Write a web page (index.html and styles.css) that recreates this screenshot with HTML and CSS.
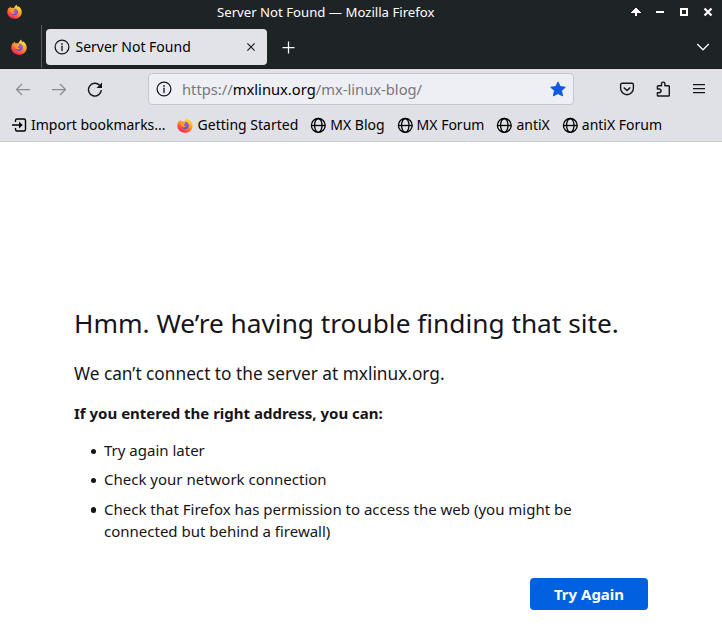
FILE: index.html
```html
<!DOCTYPE html>
<html lang="en">
<head>
<meta charset="utf-8">
<title>Server Not Found — Mozilla Firefox</title>
<link rel="stylesheet" href="styles.css">
</head>
<body>
<svg class="defs" width="0" height="0" aria-hidden="true">
  <defs>
    <linearGradient id="flame" x1="0.8" y1="0" x2="0.25" y2="1">
      <stop offset="0" stop-color="#fff44f"/>
      <stop offset="0.35" stop-color="#ffb52a"/>
      <stop offset="0.65" stop-color="#ff6a30"/>
      <stop offset="1" stop-color="#f5156c"/>
    </linearGradient>
    <radialGradient id="core" cx="0.6" cy="0.35" r="0.7">
      <stop offset="0" stop-color="#a05cf0"/>
      <stop offset="1" stop-color="#5b4bc8"/>
    </radialGradient>
    <symbol id="firefox" viewBox="0 0 16 16">
      <path fill="url(#flame)" d="M10.2.4c.3 1 .1 1.600 1.500 2.700.3-.1.300-.5.200-.9 2.300 1.400 3.800 3.700 3.800 6.500 0 4.100-3.400 7.100-7.700 7.100S.3 12.800.3 8.600c0-1.900.7-3.600 1.400-4.700l.3 1c.4-.9 1-1.700 1.700-2.300 0 .8.200 1.300.7 1.700 1-.3 2-.2 2.800.2C8 3.300 8.600 1.500 10.200.4z"/>
      <path fill="url(#core)" d="M5.200 7.500c.6-.5 1.500-.6 2.300-.6L8.500 4.700c2 .4 3.300 1.900 3.300 3.800 0 2.100-1.600 3.400-3.700 3.400-2 0-3.500-1.300-3.500-3z"/>
      <path fill="#ff9a2b" d="M3.200 6.200c1-.8 2.300-.6 3.200 0l1.900.3c-.2.800-1.300.9-1.500 1.700.1 1.100 1.500 1.300 2.500.8-.5 1.200-2 1.800-3.400 1.200C4.500 9.600 3.400 8 3.200 6.200z"/>
    </symbol>
    <symbol id="info" viewBox="0 0 16 16">
      <circle cx="8" cy="8" r="6.900" fill="none" stroke="currentColor" stroke-width="1.250"/>
      <circle cx="8" cy="4.900" r=".85" fill="currentColor"/>
      <path d="M8 7.200v4.400" stroke="currentColor" stroke-width="1.300" stroke-linecap="round"/>
    </symbol>
    <symbol id="globe" viewBox="0 0 16 16">
      <g fill="none" stroke="currentColor" stroke-width="1.300">
        <circle cx="8.300" cy="8.400" r="6.900"/>
        <ellipse cx="8.300" cy="8.400" rx="3.700" ry="6.900"/>
        <path d="M1.400 8.500h13.800"/>
      </g>
    </symbol>
  </defs>
</svg>

<header class="titlebar">
  <svg class="app-icon" width="15" height="15"><use href="#firefox"/></svg>
  <h1 class="window-title">Server Not Found — Mozilla Firefox</h1>
  <div class="window-controls">
    <svg width="12" height="12" viewBox="0 0 12 12" shape-rendering="crispEdges"><path fill="#fff" d="M5 2h2v1h1v1h1v1h1v1h1v1H7v3H5V7H1V6h1V5h1V4h1V3h1z"/></svg>
    <svg width="12" height="12" viewBox="0 0 12 12" shape-rendering="crispEdges"><path fill="#fff" d="M2 5h8v2H2z"/></svg>
    <svg width="12" height="12" viewBox="0 0 12 12" shape-rendering="crispEdges"><path fill="none" stroke="#fff" stroke-width="2" d="M3 3h6v6H3z"/></svg>
    <svg width="12" height="12" viewBox="0 0 12 12"><path stroke="#fff" stroke-width="2.200" d="M2.500 2.500l7 7m0-7l-7 7"/></svg>
  </div>
</header>

<nav class="tabbar">
  <div class="pinned"><svg width="16" height="16"><use href="#firefox"/></svg></div>
  <div class="tab">
    <svg width="16" height="16"><use href="#info"/></svg>
    <span class="tab-label">Server Not Found</span>
    <svg class="tab-close" width="10" height="10" viewBox="0 0 10 10"><path stroke="currentColor" stroke-width="1.100" d="M1.400 1.400l7.200 7.200m0-7.200L1.400 8.600"/></svg>
  </div>
  <svg class="new-tab" width="13" height="13" viewBox="0 0 13 13"><path stroke="currentColor" stroke-width="1.250" d="M6.500 .5v12M.5 6.500h12"/></svg>
  <svg class="all-tabs" width="14" height="8" viewBox="0 0 14 8"><path fill="none" stroke="currentColor" stroke-width="1.300" d="M1.200 1L7 6.800 12.800 1"/></svg>
</nav>

<div class="toolbar">
  <svg class="nav-icon dim" width="16" height="16" viewBox="0 0 16 16"><path d="M15 8.500H1.500M7 3L1.500 8.500 7 14"/></svg>
  <svg class="nav-icon dim" width="16" height="16" viewBox="0 0 16 16"><path d="M1 8.500h13.500M9 3l5.500 5.500L9 14"/></svg>
  <svg class="nav-icon reload" width="16" height="16" viewBox="0 0 16 16"><path d="M14.300 9A6.400 6.400 0 1 1 12.500 4.200"/><path class="solid" d="M15 1.500V7H9.500z"/></svg>
  <div class="urlbar">
    <svg width="16" height="16"><use href="#info"/></svg>
    <span class="url">https://<b>mxlinux.org</b>/mx-linux-blog/</span>
    <svg class="star" width="16" height="16" viewBox="0 0 16 16"><path d="M8 .9l2.200 4.700 5.100.6-3.800 3.500 1.100 5.200L8 12.500l-4.600 2.400 1.100-5.200L.7 6.200l5.100-.6z"/></svg>
  </div>
  <svg class="nav-icon pocket" width="16" height="16" viewBox="0 0 16 16"><path d="M3 2.300h10a1.400 1.400 0 0 1 1.400 1.400V7.300a6.400 6.400 0 0 1-12.800 0V3.700A1.400 1.400 0 0 1 3 2.300zM4.700 6.500L8 9.600l3.300-3.100"/></svg>
  <svg class="nav-icon puzzle" width="16" height="16" viewBox="0 0 16 16"><path d="M2.400 8V5.500a.8.800 0 0 1 .8-.8h3.300V2.800a1.700 1.700 0 0 1 3.400 0v1.900h3.600a.8.800 0 0 1 .8.800v8.700a.8.800 0 0 1-.8.800H3.200a.8.800 0 0 1-.8-.8v-2.500h1.800a1.800 1.800 0 0 0 0-3.700z"/></svg>
  <svg class="nav-icon menu" width="16" height="16" viewBox="0 0 16 16"><path d="M2 3.500h12M2 7.500h12M2 11.500h12"/></svg>
</div>

<div class="bookmarks">
  <a class="bookmark import"><svg width="16" height="16" viewBox="0 0 16 16"><path fill="none" stroke="currentColor" stroke-width="1.400" d="M4.500 5V3.500C4.500 2.600 5.100 2 6 2h7c.9 0 1.500.6 1.500 1.500v9c0 .9-.6 1.500-1.500 1.500H6c-.9 0-1.500-.6-1.500-1.500V11M1 8h8"/><path fill="currentColor" d="M8 4.600L11.700 8 8 11.400z"/></svg>Import bookmarks...</a>
  <a class="bookmark started"><svg width="16" height="16"><use href="#firefox"/></svg>Getting Started</a>
  <a class="bookmark"><svg width="16" height="16"><use href="#globe"/></svg>MX Blog</a>
  <a class="bookmark"><svg width="16" height="16"><use href="#globe"/></svg>MX Forum</a>
  <a class="bookmark"><svg width="16" height="16"><use href="#globe"/></svg>antiX</a>
  <a class="bookmark"><svg width="16" height="16"><use href="#globe"/></svg>antiX Forum</a>
</div>

<main class="page">
  <h2 class="headline">Hmm. We’re having trouble finding that site.</h2>
  <p class="summary">We can’t connect to the server at mxlinux.org.</p>
  <p class="advice">If you entered the right address, you can:</p>
  <ul class="tips">
    <li>Try again later</li>
    <li>Check your network connection</li>
    <li>Check that Firefox has permission to access the web (you might be connected but behind a firewall)</li>
  </ul>
  <button class="retry">Try Again</button>
</main>
</body>
</html>
```
FILE: styles.css
```css
* { box-sizing: border-box; }

body {
  margin: 0;
  height: 628px;
  overflow: hidden;
  background: #fff;
  color: #15141a;
  font-family: "Noto Sans", sans-serif;
  font-size: 15px;
}

svg { display: block; flex: none; }
.defs { position: absolute; }

.titlebar {
  display: flex;
  align-items: center;
  height: 25px;
  padding: 0 8px 0 7px;
  background: #1e2326;
  color: #fff;
}
.app-icon { margin-top: -2px; }
.window-title {
  flex: 1;
  margin: 0 0 0 195px;
  font-size: 13.18px;
  font-weight: 400;
  line-height: 25px;
  white-space: nowrap;
}
.window-controls { display: flex; gap: 12px; margin-top: -1px; }

.tabbar {
  display: flex;
  align-items: center;
  height: 44px;
  background: #1e2326;
  border-bottom: 1px solid #1c1b22;
  color: #fbfbfe;
}
.pinned {
  display: flex;
  align-items: center;
  align-self: stretch;
  width: 42px;
  padding-left: 11px;
  border-right: 1px solid #55595b;
}
.tab {
  display: flex;
  align-items: center;
  width: 221px;
  height: 36px;
  margin: 1px 0 0 4px;
  padding: 0 11px 0 7.5px;
  border-radius: 4px;
  background: #e2e3e8;
  color: #15141a;
}
.tab-label {
  flex: 1;
  margin-left: 6px;
  padding-bottom: 2px;
  color: #000;
  font-size: 14px;
}
.new-tab { margin: 1px 0 0 15px; }
.all-tabs { margin: 0 12px 0 auto; }

.toolbar {
  display: flex;
  align-items: center;
  height: 40px;
  padding: 0 15px;
  background: #e0e1e6;
}
.nav-icon {
  fill: none;
  stroke: #15141a;
  stroke-width: 1.4;
  stroke-linejoin: round;
  margin-right: 20px;
}
.nav-icon.dim { stroke: #8b8c92; stroke-width: 1.25; }
.nav-icon.reload { margin-right: 45px; }
.nav-icon .solid { fill: #15141a; stroke: none; }
.nav-icon.menu { margin-right: 0; stroke-width: 1.25; }
.urlbar {
  display: flex;
  align-items: center;
  width: 426px;
  height: 32px;
  margin-right: 45px;
  padding: 0 7px 0 6.5px;
  border: 1px solid #c6c7ce;
  border-radius: 4px;
  background: #edeff5;
}
.url { flex: 1; margin-left: 10.5px; color: #77777d; font-size: 14.72px; }
.url b { color: #000; font-weight: 400; }
.star { fill: #1059dc; stroke: #1059dc; stroke-linejoin: round; }

.bookmarks {
  display: flex;
  align-items: center;
  gap: 12px;
  height: 33px;
  padding: 0 0 2px 11px;
  background: #e0e1e6;
  border-bottom: 1px solid #c9cad0;
  color: #000;
}
.bookmark {
  display: flex;
  align-items: center;
  gap: 4px;
  font-size: 14px;
  white-space: nowrap;
}
.bookmark svg { margin-top: 1px; }
.started svg { margin: 1px 1px 0 -1px; }

.page { padding: 163px 74px 0; }
.headline {
  margin: 0;
  font-size: 26.25px;
  font-weight: 400;
  line-height: 36px;
  white-space: nowrap;
}
.summary { margin: 20px 0 0; font-size: 17.25px; line-height: 26px; }
.advice { margin: 15px 0 0; font-weight: 700; line-height: 22px; }
.tips { width: 520px; margin: 15px 0 0; padding-left: 30px; line-height: 22px; list-style: none; }
.tips li { position: relative; margin-bottom: 7.4px; }
.tips li::before {
  content: "";
  position: absolute;
  left: -13px;
  top: 9.5px;
  width: 5.4px;
  height: 5.4px;
  border-radius: 50%;
  background: #15141a;
}
.retry {
  display: block;
  width: 118px;
  height: 32px;
  margin: 36.2px 0 0 auto;
  border: 0;
  border-radius: 4px;
  background: #0061e0;
  color: #fbfbfe;
  font: 700 15px "Noto Sans", sans-serif;
}
```
